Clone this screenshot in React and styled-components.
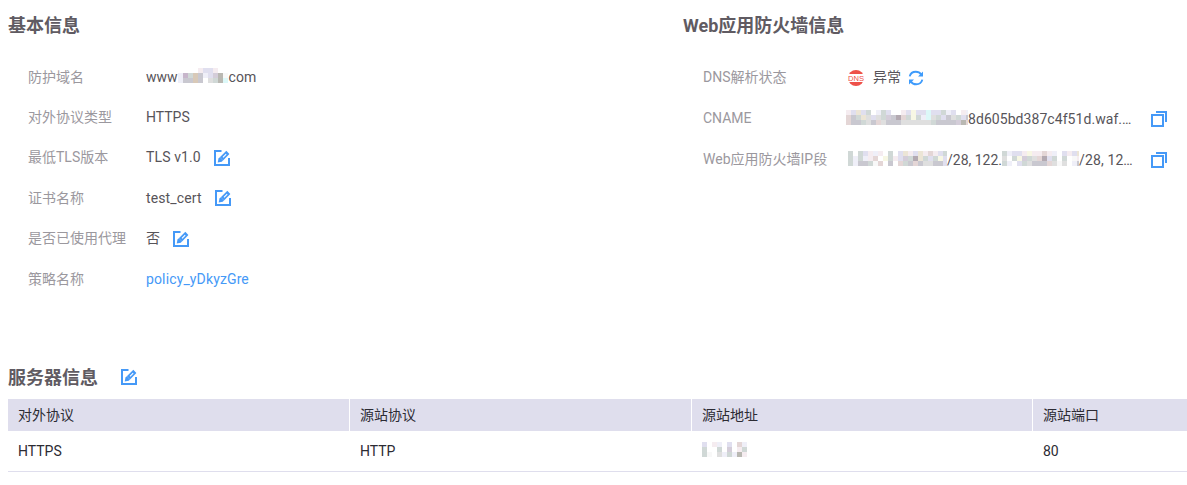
import React from 'react';
import styled, { createGlobalStyle } from 'styled-components';

const GlobalStyle = createGlobalStyle`
  * { box-sizing: border-box; }
  body {
    margin: 0;
    background: #fff;
    font-family: Roboto, "Noto Sans CJK SC", sans-serif;
    font-size: 14px;
    color: #575459;
  }
`;

const Page = styled.main`
  width: 1187px;
  height: 485px;
  padding: 0 0 0 8px;
  overflow: hidden;
`;

const Summary = styled.div`
  display: grid;
  grid-template-columns: 675px 1fr;
  height: 352px;
`;

const Title = styled.h2`
  margin: 0;
  height: 50px;
  line-height: 52px;
  font-size: 18px;
  font-weight: 700;
  color: #605b62;
  white-space: nowrap;
`;

const Fields = styled.dl`
  margin: 0;
  padding: 7px 0 0 20px;
`;

const Field = styled.div`
  display: grid;
  grid-template-columns: ${(p) => p.$label}px 1fr;
  height: ${(p) => p.$height}px;
  line-height: 40px;
  white-space: nowrap;
`;

const Label = styled.dt`
  color: #9b989e;
`;

const Value = styled.dd`
  margin: 0;
  display: flex;
  align-items: center;
  height: 40px;
  padding-left: ${(p) => p.$indent || 0}px;
  padding-top: ${(p) => p.$drop || 0}px;
`;

const Spaced = styled.span`
  letter-spacing: ${(p) => p.$tracking || 0.12}px;
`;

const Ellipsized = styled.div`
  display: flex;
  align-items: center;
  flex: none;
  width: ${(p) => p.$width}px;
`;

const IconSvg = styled.svg`
  display: block;
  flex: none;
  margin-left: ${(p) => p.$gap || 0}px;
  margin-top: ${(p) => p.$drop || 0}px;
`;

const StatusText = styled.span`
  margin-left: 9px;
`;

const Link = styled.a`
  color: #4599f7;
  letter-spacing: 0.13px;
  text-decoration: none;
`;

const ServerHeader = styled.div`
  display: flex;
  align-items: center;
  height: 47px;
  padding-top: 2px;
`;

const Table = styled.table`
  width: 1179px;
  border-collapse: separate;
  border-spacing: 0;
  table-layout: fixed;
  color: #2c2b33;
`;

const Col = styled.col`
  width: ${(p) => (p.$width ? `${p.$width}px` : 'auto')};
`;

const Th = styled.th`
  height: 32px;
  padding: 0 10px;
  background: #dfdeed;
  border-right: ${(p) => (p.$last ? 'none' : '1px solid #fff')};
  font-weight: 400;
  line-height: 32px;
  text-align: left;
`;

const Td = styled.td`
  height: 41px;
  padding: 0 10px;
  border-bottom: 1px solid #dfdeed;
  line-height: 40px;
`;

const MosaicSvg = styled.svg`
  display: block;
  flex: none;
  margin-top: ${(p) => p.$shift || 0}px;
  margin-right: ${(p) => p.$after || 0}px;
  margin-left: ${(p) => p.$before || 0}px;
`;

const tones = {
  l: '#e0dfef', e: '#efeff8', p: '#f5ecf0', g: '#dfdfdf', c: '#d0d8d6',
  d: '#c9c8d0', r: '#e4d6d6', b: '#b9b8b2', k: '#b3a9b1', m: '#dcf8f8',
  y: '#f7f7e4', s: '#ece5d6', v: '#d4cdd9', t: '#d8c9b8', u: '#c7b6cb', f: '#f8f8f8',
};

const Mosaic = ({ rows, width, shift, before, after }) => (
  <MosaicSvg
    width={width || rows[0].length * 5}
    height="15"
    $shift={shift}
    $before={before}
    $after={after}
    shapeRendering="crispEdges"
    aria-hidden="true"
  >
    {rows.flatMap((row, y) =>
      [...row].map((k, x) =>
        tones[k] ? <rect key={`${x}-${y}`} x={x * 5} y={y * 5} width="5" height="5" fill={tones[k]} /> : null
      )
    )}
  </MosaicSvg>
);

const domainMask = [
  '....pllp..',
  'euctdelvbf',
  'eddtd.gcbm',
];
const cnameMask = [
  'plslcweclwwplyllmllcelwpe',
  'rdcsglgcvdkrcycemgcldgcld',
  'rddcgdrgdddggggggcddddvbr',
];
const ipMask = [
  'cwclpepwcwlsplsprplc',
  'ceceprwycplvcksclcyl',
  'ceddcfrwdwrcdrdggddl',
];
const rangeMask = [
  'cellpypprpewlpls',
  'gwcyvcgrklcwcwfp',
  'cewlcgdddrgfgwed',
];
const addressMask = [
  'lwpewlwre',
  'cwwcwvwpc',
  'cfwgecebp',
];

const EditIcon = ({ gap, drop }) => (
  <IconSvg width="16" height="16" viewBox="0 0 16 16" $gap={gap} $drop={drop} fill="none">
    <path d="M7.5 1H1v14h14V8" stroke="#4599f7" strokeWidth="2" />
    <path d="M3.7 12.6l.8-4 1.3-1.3 3.2 3.2-1.3 1.3z" fill="#4599f7" />
    <path d="M5.8 7.3L12.3.8l3.1 3.1L9 10.4z" fill="#4599f7" />
    <path d="M9 7.4l3.2-3.2" stroke="#fff" strokeWidth="1.1" />
  </IconSvg>
);

const CopyIcon = () => (
  <IconSvg width="16" height="16" viewBox="0 0 16 16" fill="none" stroke="#4599f7" strokeWidth="2">
    <path d="M1 4h11v11H1z" />
    <path d="M5 1h10v10" />
  </IconSvg>
);

const DnsIcon = () => (
  <IconSvg width="16" height="16" viewBox="0 0 16 16" $drop={1}>
    <circle cx="8" cy="8" r="8" fill="#ee5149" />
    <path d="M0 4h16v8H0z" fill="#fff" />
    <text x="0" y="11" textLength="16" lengthAdjust="spacingAndGlyphs" fontFamily="Liberation Sans, sans-serif" fontSize="8" fill="#ee5149">DNS</text>
  </IconSvg>
);

const RefreshIcon = () => (
  <IconSvg width="16" height="16" viewBox="0 0 16 16" $gap={7} $drop={1} fill="none" stroke="#3e9bfb" strokeWidth="1.9">
    <path d="M1.7 6.4C2.4 3.5 4.9 1.7 7.8 1.7c2.3 0 4.2 1 5.4 2.7M14.3 9.6c-.7 2.9-3.2 4.7-6.1 4.7-2.3 0-4.2-1-5.4-2.7" />
    <path d="M15 1.6v4.8h-5zM1 14.4V9.6h5z" fill="#3e9bfb" stroke="none" />
  </IconSvg>
);

const BasicField = ({ label, height = 40, children }) => (
  <Field $label={118} $height={height}>
    <Label>{label}</Label>
    <Value>{children}</Value>
  </Field>
);

export default function App() {
  return (
    <>
      <GlobalStyle />
      <Page>
        <Summary>
          <section>
            <Title>基本信息</Title>
            <Fields>
              <BasicField label="防护域名">
                www<Mosaic rows={domainMask} shift={-3} after={1} />com
              </BasicField>
              <BasicField label="对外协议类型">HTTPS</BasicField>
              <BasicField label="最低TLS版本" height={41}>
                <Spaced>TLS v1.0</Spaced>
                <EditIcon gap={13} drop={2} />
              </BasicField>
              <BasicField label="证书名称" height={40}>
                <Spaced>test_cert</Spaced>
                <EditIcon gap={13} />
              </BasicField>
              <BasicField label="是否已使用代理" height={41}>
                否<EditIcon gap={13} drop={2} />
              </BasicField>
              <BasicField label="策略名称">
                <Link>policy_yDkyzGre</Link>
              </BasicField>
            </Fields>
          </section>
          <section>
            <Title>Web应用防火墙信息</Title>
            <Fields>
              <Field $label={143} $height={41}>
                <Label>DNS解析状态</Label>
                <Value $indent={2}>
                  <DnsIcon />
                  <StatusText>异常</StatusText>
                  <RefreshIcon />
                </Value>
              </Field>
              <Field $label={143} $height={41}>
                <Label>CNAME</Label>
                <Value $drop={2}>
                  <Ellipsized $width={305}>
                    <Mosaic rows={cnameMask} width={122} shift={-3} />
                    <Spaced $tracking={0.06}>8d605bd387c4f51d.waf.…</Spaced>
                  </Ellipsized>
                  <CopyIcon />
                </Value>
              </Field>
              <Field $label={143} $height={41}>
                <Label>Web应用防火墙IP段</Label>
                <Value $indent={2} $drop={2}>
                  <Ellipsized $width={303}>
                    <Mosaic rows={ipMask} width={99} shift={-3} />
                    /28, 122.
                    <Mosaic rows={rangeMask} width={77} shift={-3} />
                    <Spaced>/28, 12…</Spaced>
                  </Ellipsized>
                  <CopyIcon />
                </Value>
              </Field>
            </Fields>
          </section>
        </Summary>
        <section>
          <ServerHeader>
            <Title>服务器信息</Title>
            <EditIcon gap={23} />
          </ServerHeader>
          <Table>
            <colgroup>
              <Col $width={342} />
              <Col $width={342} />
              <Col $width={341} />
              <Col />
            </colgroup>
            <thead>
              <tr>
                <Th>对外协议</Th>
                <Th>源站协议</Th>
                <Th>源站地址</Th>
                <Th $last>源站端口</Th>
              </tr>
            </thead>
            <tbody>
              <tr>
                <Td>HTTPS</Td>
                <Td>HTTP</Td>
                <Td><Mosaic rows={addressMask} shift={-4} /></Td>
                <Td>80</Td>
              </tr>
            </tbody>
          </Table>
        </section>
      </Page>
    </>
  );
}
